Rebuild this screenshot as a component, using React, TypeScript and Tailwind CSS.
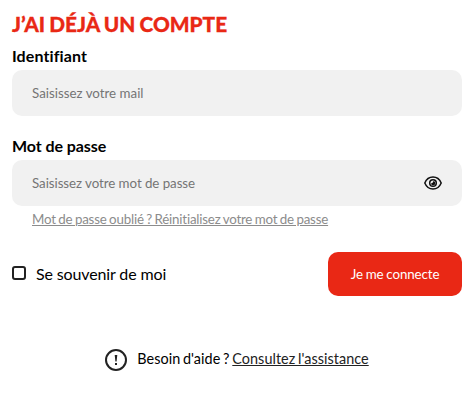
import React, { useState } from 'react';

export default function App() {
    const [showPassword, setShowPassword] = useState(false);
    const [remember, setRemember] = useState(false);

    return (
        <div className="h-[410px] w-[476px] bg-white px-3 pt-2 font-['Lato',sans-serif] text-black">
            <h1 className="h-8 text-[20.8px] leading-[31px] font-black [word-spacing:-0.8px] text-[#e92815] [-webkit-text-stroke:0.3px_#e92815]">J’AI DÉJÀ UN COMPTE</h1>

            <form onSubmit={(e) => e.preventDefault()} className="w-[450px]">
                <label htmlFor="mail" className="block h-[30px] pt-1 text-base leading-6 font-bold tracking-[0.1px]">Identifiant</label>
                <input
                    id="mail"
                    type="text"
                    placeholder="Saisissez votre mail"
                    className="block h-[46px] w-full rounded-[10px] bg-[#f1f1f1] px-5 text-[13.333px] placeholder:text-[#757575]"
                />

                <label htmlFor="password" className="mt-[14px] block h-[30px] pt-1 text-base leading-6 font-bold tracking-[-0.08px]">Mot de passe</label>
                <div className="flex h-[46px] items-center rounded-[10px] bg-[#f1f1f1] px-5">
                    <input
                        id="password"
                        type={showPassword ? 'text' : 'password'}
                        placeholder="Saisissez votre mot de passe"
                        className="h-[46px] min-w-0 flex-1 text-[13.333px] tracking-[-0.06px] placeholder:text-[#757575]"
                    />
                    <button type="button" aria-label="Afficher" onClick={() => setShowPassword(!showPassword)}>
                        <svg width="18" height="14" viewBox="0 0 18 14" fill="none" stroke="#111" strokeWidth="1.5">
                            <path d="M.8 7C2.400 3.100 5.400 1 9 1s6.600 2.100 8.200 6c-1.600 3.900-4.600 6-8.200 6S2.400 10.900.8 7Z" />
                            <circle cx="9" cy="7" r="3.300" />
                            <path d="M9.500 5A2.200 2.200 0 1 1 7 7.500Q9 7.300 9.500 5Z" fill="#111" stroke="none" />
                        </svg>
                    </button>
                </div>
                <a href="#" className="ml-5 block h-[26px] text-[13.333px] leading-[26px] tracking-[-0.2px] [word-spacing:-0.7px] text-[#8c8c8c] underline">
                    Mot de passe oublié ? Réinitialisez votre mot de passe
                </a>

                <div className="mt-5 flex h-11 items-center justify-between">
                    <label className="flex items-center gap-[10px] text-base tracking-[-0.13px]">
                        <input
                            type="checkbox"
                            checked={remember}
                            onChange={() => setRemember(!remember)}
                            className="mb-0.5 h-[14px] w-[14px] appearance-none rounded-[3px] border-2 border-[#222] checked:bg-[#222]"
                        />
                        Se souvenir de moi
                    </label>
                    <button type="submit" className="h-11 w-[134px] rounded-[10px] bg-[#e92815] pt-0.5 text-[13.333px] tracking-[-0.1px] [word-spacing:-0.5px] text-white">
                        Je me connecte
                    </button>
                </div>
            </form>

            <div className="mt-[51px] flex w-[450px] items-center justify-center text-[14.4px] leading-6">
                <svg width="22" height="22" viewBox="0 0 22 22" fill="none" stroke="#222" strokeWidth="2" className="mt-0.5 mr-[10px]">
                    <circle cx="11" cy="11" r="10" />
                    <path d="M9.700 6h2.600l-.7 6.500h-1.200zM10 14h2v2h-2z" fill="#222" stroke="none" />
                </svg>
                <span className="tracking-[0.05px] [word-spacing:-1px]">Besoin d'aide ? <a href="#" className="text-[#222] underline">Consultez l'assistance</a></span>
            </div>
        </div>
    );
}
